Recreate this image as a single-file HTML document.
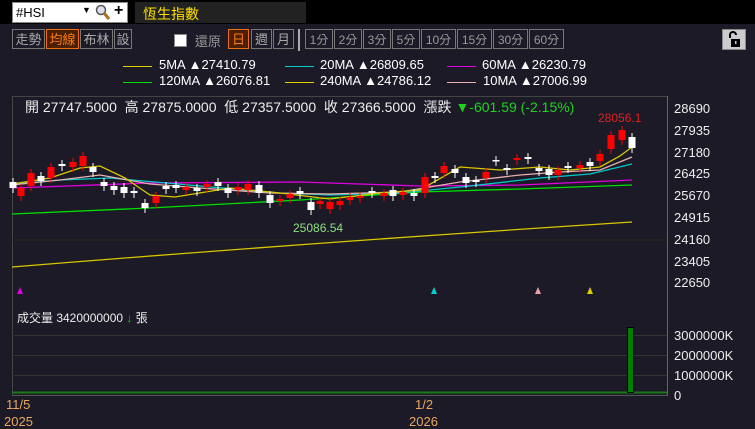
<!DOCTYPE html><html><head><meta charset="utf-8"><style>
body{margin:0;width:755px;height:427px;overflow:hidden;background:#1b1a26;font-family:"Liberation Sans","Noto Sans CJK TC",sans-serif;position:relative}
.a{position:absolute;white-space:nowrap}
.b{position:absolute;top:29px;height:20px;border:1px solid #777;color:#aaa;font-size:13px;line-height:20px;text-align:center;box-sizing:border-box}
.o{border-color:#f07010;background:#4a2000;color:#ff7a10}
.s{font-size:12px;color:#999}
.l{position:absolute;height:1px}
.t{color:#fff;font-size:13px}
</style></head><body>
<div class="a" style="left:0;top:0;width:755px;height:24px;background:#000"></div>
<div class="a" style="left:12px;top:2px;width:116px;height:21px;background:#fff;border:1px solid #888;box-sizing:border-box"></div>
<div class="a" style="left:16px;top:5px;font-size:13px;color:#000">#HSI</div>
<div class="a" style="left:82px;top:5px;font-size:9px;color:#000">▼</div>
<svg class="a" style="left:95px;top:4px" width="16" height="17"><circle cx="6" cy="6" r="4.5" fill="#dde" stroke="#555" stroke-width="1.5"/><line x1="9" y1="9" x2="14" y2="15" stroke="#a87020" stroke-width="3"/></svg>
<div class="a" style="left:114px;top:2px;font-size:16px;font-weight:bold;color:#000">+</div>
<div class="a" style="left:135px;top:2px;width:171px;height:21px;background:#222"></div>
<div class="a" style="left:143px;top:4px;font-size:14px;color:#ffe000">恆生指數</div>

<div class="b" style="left:12px;width:33px">走勢</div>
<div class="b o" style="left:46px;width:33px">均線</div>
<div class="b" style="left:80px;width:33px">布林</div>
<div class="b" style="left:114px;width:18px">設</div>
<div class="a" style="left:174px;top:34px;width:11px;height:11px;background:#fff;border:1px solid #888"></div>
<div class="a" style="left:195px;top:31px;font-size:13px;color:#999">還原</div>
<div class="b o" style="left:228px;width:21px">日</div>
<div class="b" style="left:251px;width:21px">週</div>
<div class="b" style="left:273px;width:21px">月</div>
<div class="a" style="left:298px;top:29px;width:2px;height:22px;background:#aaa"></div>
<div class="b s" style="left:305px;width:28px">1分</div>
<div class="b s" style="left:334px;width:28px">2分</div>
<div class="b s" style="left:363px;width:28px">3分</div>
<div class="b s" style="left:392px;width:28px">5分</div>
<div class="b s" style="left:421px;width:35px">10分</div>
<div class="b s" style="left:457px;width:35px">15分</div>
<div class="b s" style="left:493px;width:35px">30分</div>
<div class="b s" style="left:529px;width:35px">60分</div>
<div class="a" style="left:722px;top:29px;width:24px;height:21px;background:#ccc;border:1px solid #888;box-sizing:border-box"></div>
<svg class="a" style="left:727px;top:31px" width="14" height="17"><path d="M3 7V4a3 3 0 0 1 6 0" fill="none" stroke="#000" stroke-width="2"/><rect x="4" y="8" width="9" height="8" fill="#000"/><rect x="8" y="10" width="1.5" height="3" fill="#ccc"/></svg>

<div class="l" style="left:123px;top:66px;width:29px;background:#e0d000"></div><div class="a t" style="left:159px;top:57px">5MA ▲27410.79</div>
<div class="l" style="left:285px;top:66px;width:29px;background:#00d0d0"></div><div class="a t" style="left:320px;top:57px">20MA ▲26809.65</div>
<div class="l" style="left:447px;top:66px;width:29px;background:#e000e0"></div><div class="a t" style="left:482px;top:57px">60MA ▲26230.79</div>
<div class="l" style="left:123px;top:82px;width:29px;background:#00e000"></div><div class="a t" style="left:159px;top:73px">120MA ▲26076.81</div>
<div class="l" style="left:285px;top:82px;width:29px;background:#e0d000"></div><div class="a t" style="left:320px;top:73px">240MA ▲24786.12</div>
<div class="l" style="left:447px;top:82px;width:29px;background:#e8b0b0"></div><div class="a t" style="left:483px;top:73px">10MA ▲27006.99</div>

<svg class="a" style="left:0;top:0" width="755" height="427">
<line x1="12.5" y1="96" x2="12.5" y2="395" stroke="#444"/>
<line x1="12" y1="96.5" x2="667" y2="96.5" stroke="#444"/>
<line x1="667.5" y1="96" x2="667.5" y2="396" stroke="#666"/>
<line x1="12" y1="240" x2="667" y2="240" stroke="#222a1a"/>
<line x1="12" y1="335.5" x2="667" y2="335.5" stroke="#333"/>
<line x1="12" y1="355.5" x2="667" y2="355.5" stroke="#333"/>
<line x1="12" y1="375.5" x2="667" y2="375.5" stroke="#333"/>
<line x1="12" y1="392.5" x2="667" y2="392.5" stroke="#1a7a1a" stroke-width="2"/>
<line x1="12" y1="395.5" x2="667" y2="395.5" stroke="#555"/>
<rect x="627.5" y="327.5" width="6" height="65" fill="#008000" stroke="#000"/>
<g fill="none" stroke-width="1.3">
<path d="M12 267 Q320 242 632 222" stroke="#d8c800"/>
<path d="M12 214 L150 208 L300 200 L420 192 L520 189 L632 185" stroke="#00e000"/>
<path d="M12 188 L150 183 L300 182 L420 186 L520 185 L632 180" stroke="#e000e0"/>
<path d="M12 184 L60 180 L110 178 L200 186 L280 193 L330 195 L400 193 L470 186 L540 178 L590 174 L632 164" stroke="#00c8c8"/>
<path d="M12 185 L60 180 L100 175 L150 184 L200 188 L270 193 L330 194 L400 192 L460 182 L520 175 L560 172 L600 170 L632 157" stroke="#e8b0b0"/>
<path d="M12 184 L50 178 L80 168 L100 166 L125 178 L150 195 L175 197 L230 188 L280 193 L330 199 L380 193 L420 190 L460 167 L500 170 L540 167 L570 170 L600 167 L620 156 L632 147" stroke="#d8c800"/>
</g>
<g id="c"></g>
<polygon points="17,294 23,294 20,287" fill="#e000e0"/>
<polygon points="431,294 437,294 434,287" fill="#00d0d0"/>
<polygon points="535,294 541,294 538,287" fill="#e8a0a8"/>
<polygon points="587,294 593,294 590,287" fill="#e0d000"/>
</svg>
<div class="a" style="left:25px;top:97px;font-size:14px;color:#eee">開 27747.5000&nbsp; 高 27875.0000&nbsp; 低 27357.5000&nbsp; 收 27366.5000&nbsp; 漲跌 <span style="color:#20d020">▼-601.59 (-2.15%)</span></div>
<div class="a" style="left:598px;top:111px;font-size:12px;color:#e02020">28056.1</div>
<div class="a" style="left:293px;top:221px;font-size:12px;color:#90e080">25086.54</div>
<div class="a" style="left:674px;top:98px;font-size:13px;color:#eee;line-height:21.8px">28690<br>27935<br>27180<br>26425<br>25670<br>24915<br>24160<br>23405<br>22650</div>
<div class="a" style="left:17px;top:309px;font-size:12px;color:#eee">成交量 3420000000 <span style="color:#20c020">↓</span> 張</div>
<div class="a" style="left:674px;top:326px;font-size:13px;color:#eee;line-height:20px">3000000K<br>2000000K<br>1000000K<br>0</div>
<div class="a" style="left:6px;top:397px;font-size:13px;color:#e8a860">11/5</div>
<div class="a" style="left:4px;top:414px;font-size:13px;color:#e8a860">2025</div>
<div class="a" style="left:415px;top:397px;font-size:13px;color:#e8a860">1/2</div>
<div class="a" style="left:409px;top:414px;font-size:13px;color:#e8a860">2026</div>
<script>
var d=[[13,182,188,'w'],[21,188,196,'r'],[31,173,186,'r'],[41,176,181,'w'],[51,167,178,'r'],[62,164,166,'w'],[73,162,167,'r'],[83,156,166,'r'],[93,167,172,'w'],[104,182,186,'w'],[114,186,190,'w'],[124,187,193,'w'],[134,191,193,'w'],[145,203,208,'w'],[156,196,203,'r'],[166,186,189,'w'],[176,185,188,'w'],[186,187,190,'r'],[197,188,191,'w'],[207,184,187,'r'],[218,182,186,'w'],[228,188,193,'w'],[238,187,190,'r'],[248,184,190,'r'],[259,185,193,'w'],[270,195,203,'w'],[280,199,201,'r'],[290,194,198,'r'],[300,191,194,'w'],[311,202,210,'w'],[320,201,204,'r'],[330,202,209,'r'],[340,201,205,'r'],[350,197,200,'r'],[360,196,198,'r'],[372,191,193,'w'],[384,193,196,'r'],[393,190,196,'w'],[403,192,195,'r'],[414,193,196,'w'],[425,177,193,'r'],[435,176,178,'w'],[444,166,173,'r'],[455,169,173,'w'],[466,177,183,'w'],[476,180,182,'w'],[486,172,178,'r'],[496,160,161,'w'],[507,168,170,'w'],[517,158,160,'r'],[528,157,159,'w'],[539,168,171,'w'],[549,169,175,'w'],[558,170,175,'r'],[568,166,168,'w'],[580,165,168,'r'],[590,162,166,'w'],[600,154,161,'r'],[611,135,149,'r'],[622,130,140,'r'],[632,137,148,'w']];
var s='';d.forEach(function(c){var col=c[3]=='r'?'#f00':'#fff';s+='<line x1="'+c[0]+'" y1="'+(c[1]-4)+'" x2="'+c[0]+'" y2="'+(c[2]+5)+'" stroke="'+col+'"/>';var h=Math.max(c[2]-c[1],1.5);s+='<rect x="'+(c[0]-3.5)+'" y="'+c[1]+'" width="7" height="'+h+'" fill="'+col+'"/>';});
document.getElementById('c').innerHTML=s;
</script>
</body></html>
